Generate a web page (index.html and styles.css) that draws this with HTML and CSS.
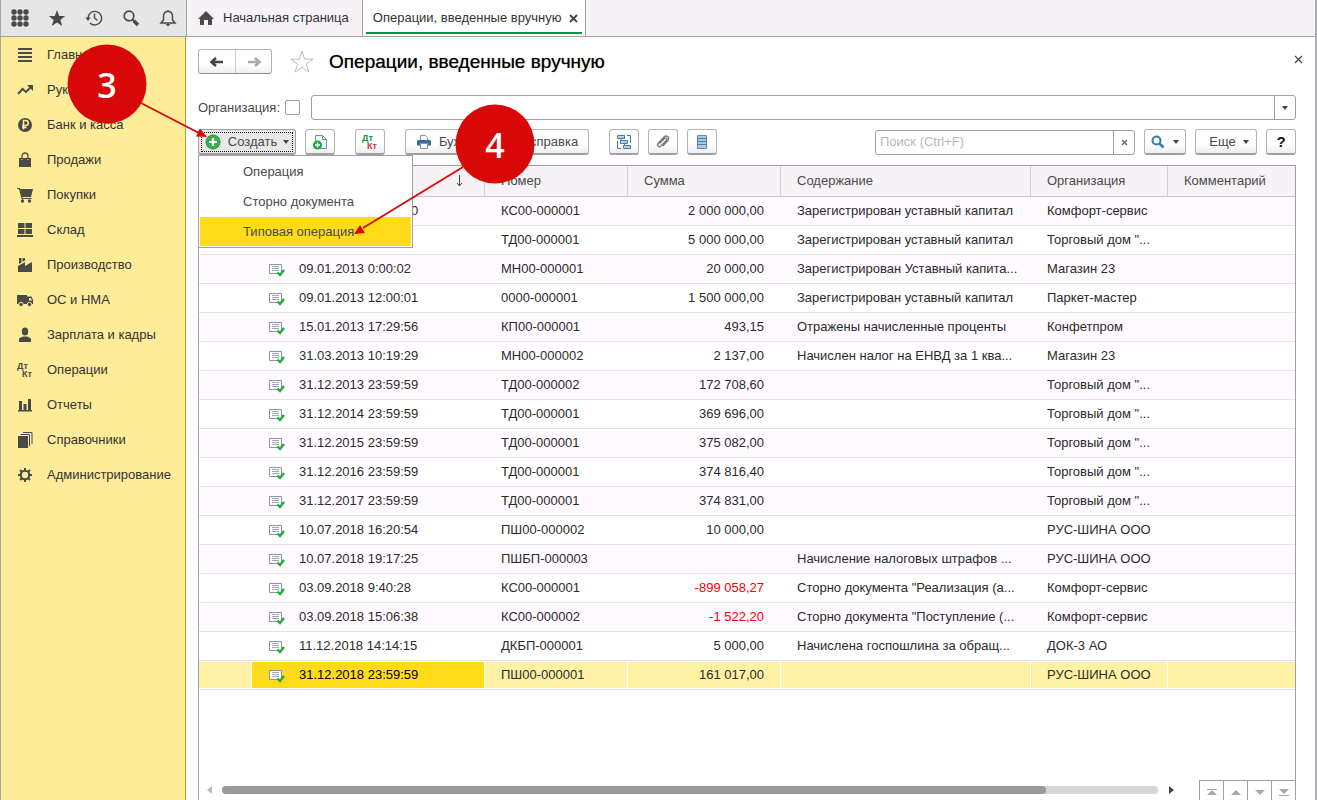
FILE: index.html
```html
<!DOCTYPE html>
<html lang="ru">
<head>
<meta charset="utf-8">
<title>Операции, введенные вручную</title>
<link rel="stylesheet" href="styles.css">
</head>
<body>
<svg class="defs" width="0" height="0" aria-hidden="true">
  <symbol id="doc" viewBox="0 0 16 14">
    <path d="M.5 1.500h12v9H.5z" fill="#fff" stroke="#8795a8"/>
    <path d="M3 3.500h7M3 5.500h7M3 7.500h7" stroke="#9aa8b8"/>
    <path d="M8.500 9.500l2.500 2.500 4-5" fill="none" stroke="#22ab38" stroke-width="2.400"/>
  </symbol>
</svg>
<div class="app">
  <header class="topbar">
    <div class="tools">
      <button class="tool" aria-label="Меню"><svg width="18" height="18" fill="#4a4a4a"><circle cx="3" cy="3" r="2.700"/><circle cx="9" cy="3" r="2.700"/><circle cx="15" cy="3" r="2.700"/><circle cx="3" cy="9" r="2.700"/><circle cx="9" cy="9" r="2.700"/><circle cx="15" cy="9" r="2.700"/><circle cx="3" cy="15" r="2.700"/><circle cx="9" cy="15" r="2.700"/><circle cx="15" cy="15" r="2.700"/></svg></button>
      <button class="tool" aria-label="Избранное"><svg width="18" height="18"><path d="M9 1l2.200 5.900 6 .2-4.800 3.800 1.800 6.100L9 13.400 3.800 17l1.800-6.100L.8 7.100l6-.2z" fill="#4a4a4a"/></svg></button>
      <button class="tool" aria-label="История"><svg width="18" height="18" fill="none" stroke="#4a4a4a" stroke-width="1.400"><path d="M3 9a6.800 6.800 0 1 1 2 5"/><path d="M9.500 4.500V9l3 2.500"/><path d="M.3 8.500h5.400L3 12z" fill="#4a4a4a" stroke="none"/></svg></button>
      <button class="tool" aria-label="Поиск"><svg width="18" height="18" fill="none" stroke="#4a4a4a"><circle cx="7" cy="7" r="4.800" stroke-width="1.700"/><path d="M10.500 10.500l2 2" stroke-width="2"/><path d="M12 12l4 4" stroke-width="3.500"/></svg></button>
      <button class="tool" aria-label="Уведомления"><svg width="18" height="18"><path d="M9 2.500c-3 0-4.500 2-4.500 5v3.500L2 14h14l-2.500-3V7.500c0-3-1.500-5-4.500-5zM9 1v2" fill="none" stroke="#4a4a4a" stroke-width="1.500"/><path d="M6.500 15h5L9 17.500z" fill="#4a4a4a"/></svg></button>
    </div>
    <nav class="tabs">
      <a class="tab" href="#"><svg width="16" height="14"><path d="M8 0l8 8h-2v6h-4V9H6v5H2V8H0z" fill="#4a4a4a"/></svg>Начальная страница</a>
      <div class="tab active"><a href="#">Операции, введенные вручную</a><button aria-label="Закрыть вкладку"><svg width="9" height="9"><path d="M1 1l7 7M8 1L1 8" stroke="#444" stroke-width="1.800"/></svg></button></div>
    </nav>
  </header>

  <nav class="sidebar">
    <a href="#"><svg viewBox="0 0 16 16"><path d="M1 1h14v2H1zM1 5h14v2H1zM1 9h14v2H1zM1 13h14v2H1z"/></svg>Главное</a>
    <a href="#"><svg viewBox="0 0 16 16"><path d="M1 12l4.500-5 3.500 3L14 5" fill="none" stroke="#4a4a4a" stroke-width="2"/><path d="M10 3h6v6z"/></svg>Руководителю</a>
    <a href="#"><svg viewBox="0 0 16 16"><circle cx="8" cy="8" r="7"/><path d="M6.500 12.500v-9h2.300a2.400 2.400 0 0 1 0 4.900H5M5 10.500h4.500" fill="none" stroke="#ffec99" stroke-width="1.500"/></svg>Банк и касса</a>
    <a href="#"><svg viewBox="0 0 16 16"><path d="M2 6h12v9H2z"/><path d="M5 8V4c0-4 6-4 6 0v4" fill="none" stroke="#4a4a4a" stroke-width="1.300"/><path d="M5 7v1M11 7v1" stroke="#ffec99"/></svg>Продажи</a>
    <a href="#"><svg viewBox="0 0 16 16"><path d="M3 2h13l-2 8H5z"/><path d="M0 1.500h2.500L5 11.500h9.500" fill="none" stroke="#4a4a4a" stroke-width="1.200"/><circle cx="5.500" cy="14" r="1.700"/><circle cx="12.500" cy="14" r="1.700"/></svg>Покупки</a>
    <a href="#"><svg viewBox="0 0 16 16"><path d="M1 1h6.500v5H1zM8.500 1H15v5H8.500zM1 7h6.500v5H1zM8.500 7H15v5H8.500zM0 13h16v2H0z"/></svg>Склад</a>
    <a href="#"><svg viewBox="0 0 16 16"><path d="M1 15V9l7-4v4l7-4v10z"/><path d="M2 7V1h2.500v4.500zM5.500 4.800V1H8v2.500z"/></svg>Производство</a>
    <a href="#"><svg viewBox="0 0 16 16"><path d="M0 3h10v9H0zM11 4.500h3.500L16 8v4h-6V4.500zM12 6v2.500h3L14 6z" fill-rule="evenodd"/><circle cx="4" cy="12.500" r="2.200" stroke="#ffec99"/><circle cx="12.500" cy="12.500" r="2.200" stroke="#ffec99"/></svg>ОС и НМА</a>
    <a href="#"><svg viewBox="0 0 16 16"><ellipse cx="8" cy="4.500" rx="3.200" ry="4"/><path d="M2 15v-2.500C2 10.500 5 10 6 9.500h4c1 .5 4 1 4 3V15z"/></svg>Зарплата и кадры</a>
    <a href="#"><svg viewBox="0 0 16 16" class="dk"><text x="0" y="7">Дт</text><text x="5" y="15">Кт</text></svg>Операции</a>
    <a href="#"><svg viewBox="0 0 16 16"><path d="M2 4h3v9H2zM6.500 7h3v6h-3zM11 2h3v11h-3zM1 13h14v1.500H1z"/></svg>Отчеты</a>
    <a href="#"><svg viewBox="0 0 16 16"><path d="M1 4h10v12H1z"/><path d="M3.500 2.500h9V14M6 .5h9V12" fill="none" stroke="#4a4a4a" stroke-width="1"/></svg>Справочники</a>
    <a href="#"><svg viewBox="0 0 16 16" fill="none" stroke="#4a4a4a"><circle cx="8" cy="8" r="4.300" stroke-width="2"/><path d="M8 1v3M8 12v3M1 8h3M12 8h3M3 3l2 2M11 11l2 2M3 13l2-2M11 5l2-2" stroke-width="2"/><circle cx="8" cy="8" r="3.200" fill="#ffec99" stroke="none"/></svg>Администрирование</a>
  </nav>

  <main class="page">
    <div class="heading">
      <div class="history">
        <button aria-label="Назад"><svg width="16" height="12"><path d="M2 6h12M7 2L2.500 6 7 10" fill="none" stroke="#444" stroke-width="2.600"/></svg></button>
        <button aria-label="Вперед"><svg width="16" height="12"><path d="M2 6h12M9 2l4.500 4L9 10" fill="none" stroke="#aaa" stroke-width="2.600"/></svg></button>
      </div>
      <button class="plain" aria-label="В избранное"><svg width="24" height="24"><path d="M12 1l2.600 8.200H23l-6.700 4.900 2.700 8L12 17.200l-7 4.900 2.700-8L1 9.200h8.400z" fill="#fff" stroke="#b4bcc6"/></svg></button>
      <h1>Операции, введенные вручную</h1>
      <button class="plain close" aria-label="Закрыть"><svg width="9" height="9"><path d="M1 1l7 7M8 1L1 8" stroke="#444" stroke-width="1.200"/></svg></button>
    </div>

    <div class="filter">
      <label for="org-on">Организация:</label>
      <input type="checkbox" id="org-on">
      <div class="combo">
        <input type="text" aria-label="Организация">
        <button aria-label="Выбрать организацию"><svg width="6" height="4"><path d="M0 0h6L3 4z" fill="#444"/></svg></button>
      </div>
    </div>

    <div class="toolbar">
      <div class="create">
        <button class="btn pressed"><svg width="16" height="16"><circle cx="8" cy="8" r="7" fill="#35b34c" stroke="#239038"/><path d="M8 4v8M4 8h8" stroke="#fff" stroke-width="2.200"/></svg><span>Создать</span><svg width="6" height="4"><path d="M0 0h6L3 4z" fill="#444"/></svg></button>
        <div class="menu" role="menu">
          <button role="menuitem">Операция</button>
          <button role="menuitem">Сторно документа</button>
          <button role="menuitem" class="current">Типовая операция</button>
        </div>
      </div>
      <button class="btn icon" aria-label="Скопировать"><svg width="16" height="18"><path d="M3.500 12V2.500h7l4 4v9H8" fill="#eef4f9" stroke="#6f8ca6"/><path d="M10.500 2.500v4h4" fill="none" stroke="#6f8ca6"/><circle cx="5.500" cy="12" r="4.500" fill="#22a33c"/><path d="M5.500 9.500v5M3 12h5" stroke="#fff" stroke-width="1.500"/></svg></button>
      <button class="btn icon spaced" aria-label="Проводки"><svg width="18" height="18" class="dk"><text x="1" y="8" fill="#0a9344">Дт</text><text x="6" y="16" fill="#d9363e">Кт</text></svg></button>
      <button class="btn report spaced"><svg width="16" height="14"><path d="M4.500 6V.5h5l2 2V6" fill="#fff" stroke="#7f97ad"/><path d="M2 5h12l1 1v4.500h-3V8H4v2.500H1V6z" fill="#386d9b"/><path d="M4.500 8.500h7v5h-7z" fill="#fff" stroke="#7f97ad"/></svg>Бухгалтерская справка</button>
      <button class="btn icon spaced" aria-label="Структура подчиненности"><svg width="16" height="16" fill="#b7d5ea" stroke="#447ba5"><path d="M1.500 1.500h7v3h-7zM4.500 6.500h7v3h-7zM7.500 11.500h7v3h-7z"/><path d="M11 1.500h3.500V9M1.500 7v7.500H5M5 5v1M8.500 10v1" fill="none"/></svg></button>
      <button class="btn icon" aria-label="Файлы"><svg width="16" height="16"><path d="M4.500 9.500l5-5c1.500-1.500 3.300.3 2 1.800l-5.500 5.700c-2 2-4.800-.5-2.800-2.800l5.600-5.900c3-3 6.500.5 4 3.500l-5 5.300" fill="none" stroke="#777" stroke-width="1.300"/></svg></button>
      <button class="btn icon" aria-label="Реестр"><svg width="12" height="16"><path d="M1.500 1.500h9v13h-9z" fill="#a9cbe2" stroke="#5c8aae"/><path d="M1 4.500h10M1 7.500h10M1 10.500h10" stroke="#4d7fa6"/></svg></button>
      <div class="search">
        <input type="text" placeholder="Поиск (Ctrl+F)" aria-label="Поиск">
        <button aria-label="Очистить"><svg width="7" height="7"><path d="M1 1l5 5M6 1L1 6" stroke="#666" stroke-width="1.300"/></svg></button>
      </div>
      <button class="btn find" aria-label="Найти"><svg width="14" height="14" fill="none" stroke="#2a7db5"><circle cx="5.500" cy="5.500" r="4" stroke-width="2"/><path d="M8.500 8.500l4 4" stroke-width="2.500"/></svg><svg width="6" height="4"><path d="M0 0h6L3 4z" fill="#444"/></svg></button>
      <button class="btn more">Еще<svg width="6" height="4"><path d="M0 0h6L3 4z" fill="#444"/></svg></button>
      <button class="btn icon help">?</button>
    </div>

    <section class="list">
      <table>
        <colgroup><col class="c-mark"><col class="c-date"><col class="c-num"><col class="c-sum"><col class="c-text"><col class="c-org"><col></colgroup>
        <thead><tr><th class="joined"></th><th class="sort"><svg width="7" height="12"><path d="M3.500 0v11M1 8l2.500 3L6 8" fill="none" stroke="#444"/></svg></th><th>Номер</th><th>Сумма</th><th>Содержание</th><th>Организация</th><th>Комментарий</th></tr></thead>
        <tbody>
          <tr><td></td><td><svg><use href="#doc"/></svg>09.01.2013 12:00:00</td><td>КС00-000001</td><td>2 000 000,00</td><td>Зарегистрирован уставный капитал</td><td>Комфорт-сервис</td><td></td></tr>
          <tr><td></td><td><svg><use href="#doc"/></svg>09.01.2013 0:00:01</td><td>ТД00-000001</td><td>5 000 000,00</td><td>Зарегистрирован уставный капитал</td><td>Торговый дом "...</td><td></td></tr>
          <tr><td></td><td><svg><use href="#doc"/></svg>09.01.2013 0:00:02</td><td>МН00-000001</td><td>20 000,00</td><td>Зарегистрирован Уставный капита...</td><td>Магазин 23</td><td></td></tr>
          <tr><td></td><td><svg><use href="#doc"/></svg>09.01.2013 12:00:01</td><td>0000-000001</td><td>1 500 000,00</td><td>Зарегистрирован уставный капитал</td><td>Паркет-мастер</td><td></td></tr>
          <tr><td></td><td><svg><use href="#doc"/></svg>15.01.2013 17:29:56</td><td>КП00-000001</td><td>493,15</td><td>Отражены начисленные проценты</td><td>Конфетпром</td><td></td></tr>
          <tr><td></td><td><svg><use href="#doc"/></svg>31.03.2013 10:19:29</td><td>МН00-000002</td><td>2 137,00</td><td>Начислен налог на ЕНВД за 1 ква...</td><td>Магазин 23</td><td></td></tr>
          <tr><td></td><td><svg><use href="#doc"/></svg>31.12.2013 23:59:59</td><td>ТД00-000002</td><td>172 708,60</td><td></td><td>Торговый дом "...</td><td></td></tr>
          <tr><td></td><td><svg><use href="#doc"/></svg>31.12.2014 23:59:59</td><td>ТД00-000001</td><td>369 696,00</td><td></td><td>Торговый дом "...</td><td></td></tr>
          <tr><td></td><td><svg><use href="#doc"/></svg>31.12.2015 23:59:59</td><td>ТД00-000001</td><td>375 082,00</td><td></td><td>Торговый дом "...</td><td></td></tr>
          <tr><td></td><td><svg><use href="#doc"/></svg>31.12.2016 23:59:59</td><td>ТД00-000001</td><td>374 816,40</td><td></td><td>Торговый дом "...</td><td></td></tr>
          <tr><td></td><td><svg><use href="#doc"/></svg>31.12.2017 23:59:59</td><td>ТД00-000001</td><td>374 831,00</td><td></td><td>Торговый дом "...</td><td></td></tr>
          <tr><td></td><td><svg><use href="#doc"/></svg>10.07.2018 16:20:54</td><td>ПШ00-000002</td><td>10 000,00</td><td></td><td>РУС-ШИНА ООО</td><td></td></tr>
          <tr><td></td><td><svg><use href="#doc"/></svg>10.07.2018 19:17:25</td><td>ПШБП-000003</td><td></td><td>Начисление налоговых штрафов ...</td><td>РУС-ШИНА ООО</td><td></td></tr>
          <tr><td></td><td><svg><use href="#doc"/></svg>03.09.2018 9:40:28</td><td>КС00-000001</td><td class="negative">-899 058,27</td><td>Сторно документа "Реализация (а...</td><td>Комфорт-сервис</td><td></td></tr>
          <tr><td></td><td><svg><use href="#doc"/></svg>03.09.2018 15:06:38</td><td>КС00-000002</td><td class="negative">-1 522,20</td><td>Сторно документа "Поступление (...</td><td>Комфорт-сервис</td><td></td></tr>
          <tr><td></td><td><svg><use href="#doc"/></svg>11.12.2018 14:14:15</td><td>ДКБП-000001</td><td>5 000,00</td><td>Начислена госпошлина за обращ...</td><td>ДОК-3 АО</td><td></td></tr>
          <tr class="selected"><td></td><td class="cell"><svg><use href="#doc"/></svg>31.12.2018 23:59:59</td><td>ПШ00-000001</td><td>161 017,00</td><td></td><td>РУС-ШИНА ООО</td><td></td></tr>
        </tbody>
      </table>
      <footer class="pager">
        <svg width="5" height="8"><path d="M5 0v8L0 4z" fill="#bbb"/></svg>
        <div class="track"><div class="thumb"></div></div>
        <svg width="5" height="8"><path d="M0 0v8l5-4z" fill="#444"/></svg>
        <div class="jumps">
          <button aria-label="В начало"><svg width="10" height="7"><path d="M0 0h10v1H0zM5 1l5 5H0z" fill="#aaa"/></svg></button>
          <button aria-label="Выше"><svg width="10" height="7"><path d="M5 1l5 5H0z" fill="#aaa"/></svg></button>
          <button aria-label="Ниже"><svg width="10" height="7"><path d="M0 1h10L5 6z" fill="#aaa"/></svg></button>
          <button aria-label="В конец"><svg width="10" height="7"><path d="M0 0h10L5 5zM0 6h10v1H0z" fill="#aaa"/></svg></button>
        </div>
      </footer>
    </section>
  </main>
</div>
<svg class="callouts" width="560" height="260">
  <g fill="#d80808" stroke="#d80808">
    <path d="M141 103l58 30M463 167l-100 61" stroke-width="1.800" fill="none"/>
    <path d="M207 137l-11-.5 4-8zM354 234l6-9 5 8z" stroke="none"/>
    <circle cx="107" cy="84" r="39.500" stroke="none"/>
    <circle cx="495" cy="144" r="39.500" stroke="none"/>
  </g>
  <text x="107" y="98">3</text>
  <text x="495" y="158">4</text>
</svg>
</body>
</html>
```
FILE: styles.css
```css
* { box-sizing: border-box; }
body { margin: 0; font: 13px/16px "Liberation Sans", Arial, sans-serif; color: #2b2b2b; background: #fff; }
button, input { font: inherit; color: inherit; }
button { display: flex; align-items: center; justify-content: center; margin: 0; padding: 0; border: 0; background: none; }
a { color: inherit; text-decoration: none; }
svg { flex: none; display: block; }
.defs, .callouts { position: absolute; top: 0; left: 0; }
.callouts { z-index: 5; pointer-events: none; }
.callouts text { font: 600 34px "Open Sans", sans-serif; fill: #fff; text-anchor: middle; }

.app { display: grid; grid-template: 37px 1fr / 185px 1fr; height: 100vh; border-left: 1px solid #a5a5a5; border-right: 2px solid #adadb0; overflow: hidden; }
.topbar { grid-column: 1 / 3; display: flex; border-bottom: 1px solid #a0a0a0; background: #f6f2f6; }
.tools { width: 186px; display: flex; align-items: center; background: #e6e6e6; border-right: 1px solid #a0a0a0; }
.tool { width: 37px; height: 36px; }
.tabs { display: flex; }
.tab { display: flex; align-items: center; gap: 9px; padding: 0 13px 0 11px; border-right: 1px solid #a0a0a0; color: #333; }
.tab.active { gap: 7px; padding: 0 7px 0 10px; background: #fff; box-shadow: inset 3px 0 #fff, inset -3px 0 #fff, inset 0 -2px #fff, inset 0 -4px #069447; }

.sidebar { display: flex; flex-direction: column; background: #ffec99; border-right: 1px solid #b8a000; color: #333; }
.sidebar a { display: flex; align-items: center; gap: 14px; height: 35px; padding-left: 16px; }
.sidebar svg { width: 16px; height: 16px; fill: #4a4a4a; }
.dk { font: bold 9px "Liberation Sans", sans-serif; }

.page { display: flex; flex-direction: column; min-width: 0; min-height: 0; padding: 12px 19px 0 12px; }
.heading { display: flex; align-items: center; height: 25px; margin-bottom: 21px; }
.history { display: flex; border: 1px solid #b0b0b0; border-bottom-color: #8c8c8c; border-radius: 3px; background: linear-gradient(#fff 60%, #f0eef0); }
.history button { width: 36px; height: 23px; }
.history button + button { border-left: 1px solid #ccc; }
.plain { margin-left: 18px; }
h1 { flex: 1; margin: 0 0 0 15px; font-size: 19px; line-height: 24px; font-weight: normal; color: #000; text-shadow: 0 0 1px #777; }
.close { align-self: flex-start; width: 9px; height: 20px; margin-right: -7px; }

.filter { display: flex; align-items: center; height: 25px; margin-bottom: 9px; color: #4a4a4a; }
.filter input[type=checkbox] { appearance: none; width: 15px; height: 15px; margin: 0 11px 0 5px; border: 1px solid #a0a0a0; border-radius: 2px; background: #fff; }
.combo, .search { display: flex; border: 1px solid #a0a0a0; border-radius: 3px; background: #fff; }
.combo { flex: 1; height: 25px; }
.combo input, .search input { flex: 1; min-width: 0; padding: 0 4px; border: 0; outline: 0; background: none; }
.combo button, .search button { width: 21px; border-left: 1px solid #a0a0a0; }

.toolbar { display: flex; align-items: center; gap: 9px; height: 26px; margin-bottom: 10px; color: #4a4a4a; }
.btn { height: 26px; border: 1px solid #b4b4b4; border-bottom: 2px solid #a0a0a0; border-radius: 3px; background: linear-gradient(#fff 60%, #f0edf0); }
.icon { width: 30px; }
.spaced { margin-left: 11px; }
.create { position: relative; }
.pressed { width: 98px; gap: 6px; background: #e8e8e8; border-color: #a0a0a0; outline: 1px dotted #000; outline-offset: -4px; }
.pressed span { margin-left: 1px; }
.report { width: 184px; gap: 7px; }
.search { flex: none; width: 260px; height: 25px; margin-left: auto; }
.search input::placeholder { color: #b8b8b8; opacity: 1; }
.find { width: 42px; gap: 8px; }
.more { width: 62px; gap: 7px; padding-left: 6px; }
.help { font-size: 15px; font-weight: bold; color: #111; }
.menu { position: absolute; top: 26px; left: 0; z-index: 1; display: grid; gap: 1px; width: 215px; padding: 1px; border: 1px solid #a0a0a0; background: #fff; }
.menu button { justify-content: flex-start; height: 29px; padding-left: 43px; }
.menu .current { background: #ffdb19; }

.list { flex: 1; display: flex; flex-direction: column; min-height: 0; border: 1px solid #a0a0a0; border-bottom: 0; }
table { width: 100%; table-layout: fixed; border-collapse: separate; border-spacing: 0; }
.c-mark { width: 53px; }
.c-date { width: 233px; }
.c-num { width: 143px; }
.c-sum { width: 153px; }
.c-text { width: 250px; }
.c-org { width: 137px; }
th { height: 31px; padding: 0 0 0 16px; text-align: left; font-weight: normal; color: #4a4a4a; background: #f6f2f6; border-right: 1px solid #d0d0d0; border-bottom: 1px solid #c8c8c8; white-space: nowrap; }
th.joined, th:last-child { border-right: 0; }
th.sort svg { margin-left: auto; margin-right: 21px; }
td { height: 29px; padding: 0 0 0 16px; border-bottom: 1px solid #e4e4e4; white-space: nowrap; }
tbody tr:nth-child(odd) td { background: #fffaff; }
td:nth-child(2) { padding-left: 17px; }
td svg { display: inline-block; width: 16px; height: 14px; margin-right: 14px; vertical-align: -4px; }
td:nth-child(4) { padding: 0 17px 0 0; text-align: right; }
td.negative { color: #f00; }
tbody tr.selected:nth-child(n) td { background: #fff2a5; box-shadow: inset -1px 0 #fff, inset 0 1px #fff, inset 0 -1px #fff; }
tbody tr.selected:nth-child(n) td:last-child { box-shadow: inset 0 1px #fff, inset 0 -1px #fff; }
tbody tr.selected:nth-child(n) td.cell { background: #ffdb19; color: #000; }

.pager { display: flex; align-items: center; height: 20px; margin-top: auto; padding-left: 8px; }
.track { flex: 1; height: 8px; margin: 0 11px 0 10px; border-radius: 4px; background: #d6d6d6; }
.thumb { width: 88%; height: 8px; border-radius: 4px; background: #9c989c; }
.jumps { display: flex; height: 20px; margin-left: 25px; border-top: 1px solid #a0a0a0; }
.jumps button { width: 24px; padding-top: 3px; border-left: 1px solid #a0a0a0; }
```
